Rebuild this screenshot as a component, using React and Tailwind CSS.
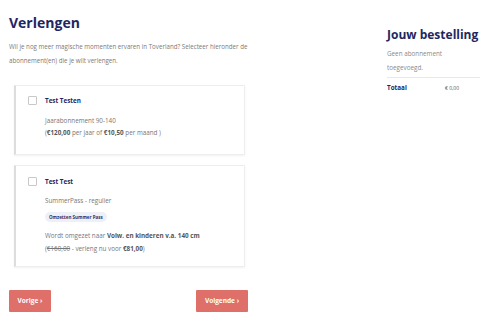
export default function App() {
  const navy = "text-[#1e2761]";
  return (
    <div className="w-[500px] h-[321px] bg-white overflow-hidden" style={{ fontFamily: '"Open Sans", "Noto Sans", sans-serif' }}>
      <div className="flex pl-[9px]">
        <div className="w-[252px]">
          <h1 className={`${navy} text-[14px] font-bold leading-[20px] mt-[13px]`}>Verlengen</h1>
          <p className="text-[#7a7a7a] text-[6.2px] leading-[14px] mt-[7px]">
            Wil je nog meer magische momenten ervaren in Toverland? Selecteer hieronder de abonnement(en) die je wilt verlengen.
          </p>
          <div className="ml-[5px] w-[231px] mt-[17px] border border-[#eeeeee] border-l-2 border-l-[#dddddd] shadow-[0_1px_2px_rgba(0,0,0,0.06)] h-[70px] flex pt-[10px] pl-[12px]">
            <div className="w-[9px] h-[9px] border border-[#c8c8c8] rounded-[1px] bg-white mr-[8px]"></div>
            <div className="text-[6.3px] text-[#777]">
              <div className={`${navy} font-bold leading-[10px]`}>Test Testen</div>
              <div className="mt-[9px] leading-[12px]">Jaarabonnement 90-140</div>
              <div className="leading-[12px]">(<b className="text-[#555]">€120,00</b> per jaar of <b className="text-[#555]">€10,50</b> per maand )</div>
            </div>
          </div>
          <div className="ml-[5px] w-[231px] mt-[10px] border border-[#eeeeee] border-l-2 border-l-[#dddddd] shadow-[0_1px_2px_rgba(0,0,0,0.06)] h-[102px] flex pt-[11px] pl-[12px]">
            <div className="w-[9px] h-[9px] border border-[#c8c8c8] rounded-[1px] bg-white mr-[8px]"></div>
            <div className="text-[6.3px] text-[#777]">
              <div className={`${navy} font-bold leading-[10px]`}>Test Test</div>
              <div className="mt-[8px] leading-[12px]">SummerPass - regulier</div>
              <div className="mt-[5px] w-fit bg-[#eef0f7] text-[#2a3270] font-bold text-[4.5px] leading-[10px] px-[4px] rounded-[5px]">Omzetten Summer Pass</div>
              <div className="mt-[7px] leading-[13px]">Wordt omgezet naar <b className="text-[#555]">Volw. en kinderen v.a. 140 cm</b></div>
              <div className="leading-[13px]">(<span className="line-through">€160,00</span> - verleng nu voor <b className="text-[#555]">€81,00</b>)</div>
            </div>
          </div>
          <div className="w-[239px] flex justify-between mt-[23px]">
            <button className="bg-[#df6f69] text-white text-[6.5px] font-bold h-[22px] w-[42px] rounded-[1px]">Vorige ›</button>
            <button className="bg-[#df6f69] text-white text-[6.5px] font-bold h-[22px] w-[52px] rounded-[1px]">Volgende ›</button>
          </div>
        </div>
        <div className="ml-[126px] w-[93px]">
          <h2 className={`${navy} text-[12px] font-bold leading-[16px] mt-[27px] whitespace-nowrap`}>Jouw bestelling</h2>
          <p className="text-[#8a8a8a] text-[6.3px] leading-[14px] mt-[4px]">Geen abonnement<br />toegevoegd.</p>
          <div className="border-t border-[#e8e8e8] mt-[2px] pt-[5px] flex text-[6.3px] leading-[10px]">
            <span className={`${navy} font-bold w-[58px]`}>Totaal</span>
            <span className="text-[#555] text-[5px]">€ 0,00</span>
          </div>
        </div>
      </div>
    </div>
  );
}
